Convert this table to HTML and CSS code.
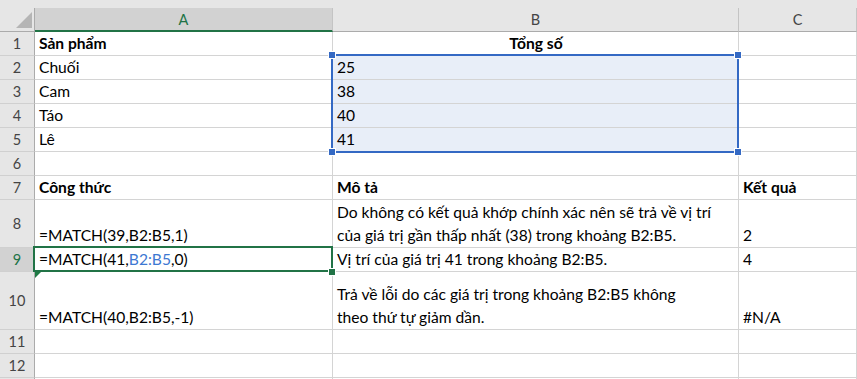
FILE: index.html
```html
<!DOCTYPE html>
<html lang="vi">
<head>
<meta charset="utf-8">
<title>MATCH</title>
<link rel="stylesheet" href="styles.css">
</head>
<body>
<div class="sheet">
  <div class="grid">
    <div class="corner"><div class="corner-tri"></div></div>
    <div class="ch sel">A</div>
    <div class="ch">B</div>
    <div class="ch">C</div>

    <div class="rh">1</div>
    <div class="c b">Sản phẩm</div>
    <div class="c b center">Tổng số</div>
    <div class="c"></div>

    <div class="rh">2</div>
    <div class="c">Chuối</div>
    <div class="c hl">25</div>
    <div class="c"></div>

    <div class="rh">3</div>
    <div class="c">Cam</div>
    <div class="c hl">38</div>
    <div class="c"></div>

    <div class="rh">4</div>
    <div class="c">Táo</div>
    <div class="c hl">40</div>
    <div class="c"></div>

    <div class="rh">5</div>
    <div class="c">Lê</div>
    <div class="c hl">41</div>
    <div class="c"></div>

    <div class="rh">6</div>
    <div class="c"></div>
    <div class="c"></div>
    <div class="c"></div>

    <div class="rh">7</div>
    <div class="c b">Công thức</div>
    <div class="c b">Mô tả</div>
    <div class="c b">Kết quả</div>

    <div class="rh">8</div>
    <div class="c">=MATCH(39,B2:B5,1)</div>
    <div class="c"><span class="ml">Do không có kết quả khớp chính xác nên sẽ trả về vị trí<br>của giá trị gần thấp nhất (38) trong khoảng B2:B5.</span></div>
    <div class="c">2</div>

    <div class="rh rsel">9</div>
    <div class="c"><span>=MATCH(41,<span class="ref">B2:B5</span>,0)</span></div>
    <div class="c">Vị trí của giá trị 41 trong khoảng B2:B5.</div>
    <div class="c">4</div>

    <div class="rh">10</div>
    <div class="c">=MATCH(40,B2:B5,-1)</div>
    <div class="c"><span class="ml">Trả về lỗi do các giá trị trong khoảng B2:B5 không<br>theo thứ tự giảm dần.</span></div>
    <div class="c">#N/A</div>

    <div class="rh">11</div>
    <div class="c"></div>
    <div class="c"></div>
    <div class="c"></div>

    <div class="rh">12</div>
    <div class="c"></div>
    <div class="c"></div>
    <div class="c"></div>

    <div class="rh"></div>
    <div class="c"></div>
    <div class="c"></div>
    <div class="c"></div>
  </div>

  <div class="range-box"></div>
  <div class="handle h-tl"></div>
  <div class="handle h-tr"></div>
  <div class="handle h-bl"></div>
  <div class="handle h-br"></div>

  <div class="active-box"></div>
  <div class="fill-handle"></div>
  <div class="err-tri"></div>
</div>
</body>
</html>
```

FILE: styles.css
```css
* { box-sizing: border-box; }
html, body { margin: 0; padding: 0; background: #ffffff; }
body { font-family: "Lato", "Noto Sans", sans-serif; overflow: hidden; }

.sheet {
  position: relative;
  width: 857px;
  height: 379px;
  padding-top: 8px;
  background: #e6e6e6;
  overflow: hidden;
}

.grid {
  display: grid;
  grid-template-columns: 35px 298px 406px 118px;
  grid-template-rows: 24px repeat(7, 24px) 48px 24px 58px 24px 24px 24px;
  background: #ffffff;
}

.corner {
  background: #e6e6e6;
  border-right: 1px solid #ababab;
  border-bottom: 1px solid #ababab;
  display: flex;
  justify-content: flex-end;
  align-items: flex-end;
  padding: 0 2px 3px 0;
}
.corner-tri {
  width: 0;
  height: 0;
  border-left: 16px solid transparent;
  border-bottom: 16px solid #b5b5b5;
}

.ch {
  background: #e6e6e6;
  border-right: 1px solid #c4c4c4;
  border-bottom: 1px solid #ababab;
  display: flex;
  align-items: center;
  justify-content: center;
  font-size: 14.5px;
  color: #444444;
}
.ch.sel {
  background: #d2d2d2;
  border-bottom: 2px solid #217346;
  color: #217346;
}

.rh {
  background: #e6e6e6;
  border-right: 1px solid #ababab;
  border-bottom: 1px solid #d0d0d0;
  display: flex;
  align-items: center;
  justify-content: center;
  font-size: 14.5px;
  color: #444444;
}
.rh.rsel {
  background: #d2d2d2;
  color: #217346;
}

.c {
  border-right: 1px solid #d4d4d4;
  border-bottom: 1px solid #d4d4d4;
  display: flex;
  align-items: flex-end;
  padding: 0 3px 0 4px;
  font-size: 15.6px;
  line-height: 23px;
  color: #000000;
  white-space: nowrap;
  overflow: hidden;
}
.c.b { font-weight: 700; }
.c.center { justify-content: center; }
.c.hl { background: #e8eef8; }
.ml { display: block; }
.ref { color: #3d78d2; }

.range-box {
  position: absolute;
  left: 331px;
  top: 54px;
  width: 408px;
  height: 99px;
  border: 2px solid #3469c4;
}
.handle {
  position: absolute;
  width: 6px;
  height: 6px;
  background: #3469c4;
  box-shadow: 0 0 0 1px #ffffff;
}
.h-tl { left: 329px; top: 52px; }
.h-tr { left: 735px; top: 52px; }
.h-bl { left: 329px; top: 149px; }
.h-br { left: 735px; top: 149px; }

.active-box {
  position: absolute;
  left: 33px;
  top: 246px;
  width: 300px;
  height: 26px;
  border: 2px solid #217346;
}
.fill-handle {
  position: absolute;
  left: 329px;
  top: 269px;
  width: 6px;
  height: 6px;
  background: #217346;
  box-shadow: 0 0 0 1px #ffffff;
}
.err-tri {
  position: absolute;
  left: 35px;
  top: 272px;
  width: 0;
  height: 0;
  border-top: 6px solid #1e7a44;
  border-right: 6px solid transparent;
}
```
